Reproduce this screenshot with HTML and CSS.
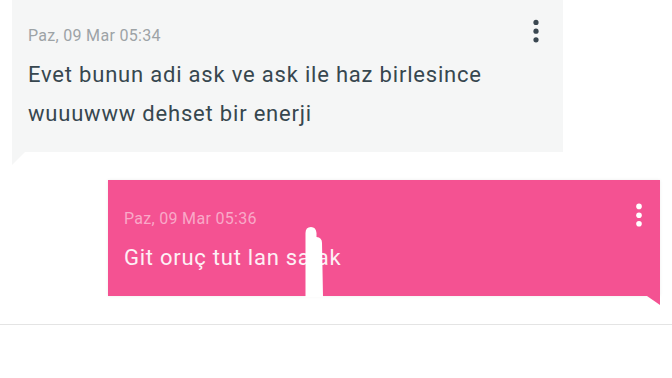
FILE: index.html
```html
<!DOCTYPE html>
<html lang="tr">
<head>
<meta charset="utf-8">
<title>Mesajlar</title>
<link rel="stylesheet" href="styles.css">
</head>
<body>
<div class="chat">
  <div class="bubble bubble-in">
    <div class="bubble-head">
      <span class="time">Paz, 09 Mar 05:34</span>
      <svg class="kebab" width="10" height="24" viewBox="0 0 10 24"><circle cx="5" cy="3.4" r="2.6"/><circle cx="5" cy="12.2" r="2.6"/><circle cx="5" cy="20.8" r="2.6"/></svg>
    </div>
    <p class="text">Evet bunun adi ask ve ask ile haz birlesince<br>wuuuwww dehset bir enerji</p>
  </div>

  <div class="bubble bubble-out">
    <div class="bubble-head">
      <span class="time">Paz, 09 Mar 05:36</span>
      <svg class="kebab" width="10" height="24" viewBox="0 0 10 24"><circle cx="5" cy="3.4" r="2.8"/><circle cx="5" cy="12.2" r="2.8"/><circle cx="5" cy="20.8" r="2.8"/></svg>
    </div>
    <p class="text">Git oruç tut lan salak</p>
    <svg class="finger" width="20" height="72" viewBox="0 0 20 72"><path d="M0.5 70 L0.5 6 Q0.5 0 6 0 Q11 0 11.5 6 L11.5 10 Q17 10.5 17 16 L18 70 Z" fill="#fff"/></svg>
  </div>

  <div class="divider"></div>
</div>
</body>
</html>
```

FILE: styles.css
```css
html, body {
  margin: 0;
  padding: 0;
  background: #ffffff;
}

body {
  font-family: Roboto, "Noto Sans", "Liberation Sans", sans-serif;
  width: 672px;
  height: 378px;
  overflow: hidden;
}

.chat {
  display: flex;
  flex-direction: column;
}

.bubble {
  position: relative;
  box-sizing: border-box;
  padding: 26px 16px 19px 16px;
}

.bubble-head {
  display: flex;
  justify-content: space-between;
  align-items: flex-start;
  height: 20px;
}

.time {
  font-size: 16px;
  line-height: 20px;
  letter-spacing: 0.3px;
}

.kebab {
  display: block;
  margin-top: -7.5px;
}

.text {
  margin: 9px 0 0 0;
  line-height: 39px;
  font-size: 22px;
  letter-spacing: 0.8px;
}

/* incoming */
.bubble-in {
  margin-left: 12px;
  width: 551px;
  background: #f5f6f6;
  padding-right: 22px;
}

.bubble-in::after {
  content: "";
  position: absolute;
  left: 0;
  top: 100%;
  width: 13px;
  height: 13px;
  background: #f5f6f6;
  clip-path: polygon(0 0, 100% 0, 0 100%);
}

.bubble-in .time {
  color: #9da3a6;
}

.bubble-in .kebab {
  fill: #3a4750;
}

.bubble-in .text {
  color: #37474f;
}

/* outgoing */
.bubble-out {
  margin-top: 28px;
  margin-left: 108px;
  width: 552px;
  padding-top: 29px;
  background: #f45292;
  box-shadow: 0 0 3px rgba(0, 0, 0, 0.08);
}

.bubble-out::after {
  content: "";
  position: absolute;
  right: 0;
  top: 100%;
  width: 13px;
  height: 9px;
  background: #f45292;
  clip-path: polygon(0 0, 100% 0, 100% 100%);
}

.bubble-out .time {
  color: #f9a9c8;
}

.bubble-out .kebab {
  fill: #ffffff;
  margin-top: -6px;
}

.bubble-out .text {
  color: #fdf0f5;
  letter-spacing: 0.75px;
}

.finger {
  position: absolute;
  left: 197px;
  top: 47px;
}

.divider {
  margin-top: 28px;
  height: 1px;
  background: #e4e4e4;
}
```
